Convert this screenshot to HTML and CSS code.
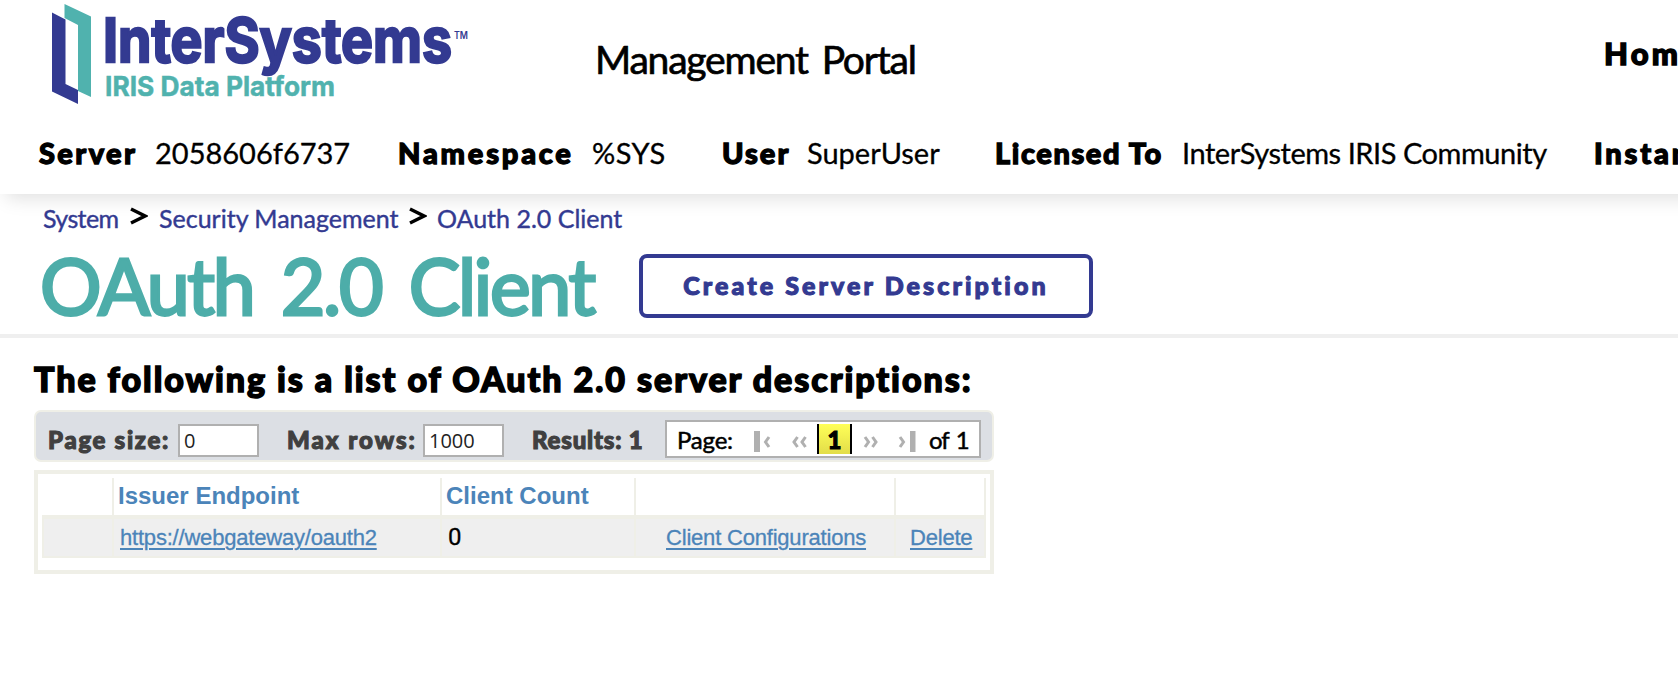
FILE: index.html
```html
<!DOCTYPE html>
<html lang="en">
<head>
<meta charset="utf-8">
<title>OAuth 2.0 Client - Management Portal</title>
<link rel="stylesheet" href="styles.css">
</head>
<body>
<header class="header">
  <div class="brand-row">
    <svg class="logo" width="420" height="106" viewBox="0 0 420 106" role="img" aria-label="InterSystems IRIS Data Platform">
      <path class="mark-teal" d="M12.500 4 39 16.500V97L26 91V25L12.500 18Z"/>
      <path class="mark-blue" d="M0 12.500 13.500 19.500V84L26 90V104L0 91.500Z"/>
      <text class="logo-name" x="51" y="61.500" textLength="349" lengthAdjust="spacingAndGlyphs">InterSystems</text>
      <text class="logo-tm" x="402" y="38.500" textLength="14" lengthAdjust="spacingAndGlyphs">TM</text>
      <text class="logo-product" x="53" y="95.500" textLength="230" lengthAdjust="spacingAndGlyphs">IRIS Data Platform</text>
    </svg>
    <div class="portal">Management Portal</div>
    <a class="home">Home</a>
  </div>
  <div class="info">
    <b class="i-server">Server</b><span>2058606f6737</span>
    <b class="i-ns">Namespace</b><span class="v-ns">%SYS</span>
    <b class="i-user">User</b><span>SuperUser</span>
    <b class="i-lic">Licensed To</b><span class="v-lic">InterSystems IRIS Community</span>
    <b class="i-inst">Instance</b>
  </div>
</header>
<nav class="crumbs">
  <a class="c1">System</a><svg class="sep" width="18" height="18" viewBox="0 0 18 18"><path d="M1 2 15 9 1 16"/></svg>
  <a class="c2">Security Management</a><svg class="sep" width="18" height="18" viewBox="0 0 18 18"><path d="M1 2 15 9 1 16"/></svg>
  <a class="c3">OAuth 2.0 Client</a>
</nav>
<div class="title-row">
  <h1 class="title">OAuth 2.0 Client</h1>
  <button class="create">Create Server Description</button>
</div>
<main class="content">
  <h2 class="lead">The following is a list of OAuth 2.0 server descriptions:</h2>
  <div class="toolbar">
    <label class="t-size">Page size:</label><input class="field" value="0">
    <label class="t-max">Max rows:</label><input class="field" value="1000">
    <span class="t-res">Results: 1</span>
    <div class="pager">
      <span class="p-label">Page:</span>
      <svg class="arrows" width="54" height="30" viewBox="0 0 54 30"><path class="bar" d="M0 7H6V28H0Z"/><path d="M15 13 11.500 18 15 23M43.500 13 40 18 43.500 23M51.500 13 48 18 51.500 23"/></svg>
      <span class="current">1</span>
      <svg class="arrows" width="54" height="30" viewBox="0 0 54 30"><path class="bar" d="M47 7H52.500V28H47Z"/><path d="M2 13 5.500 18 2 23M9.500 13 13 18 9.500 23M37 13 40.500 18 37 23"/></svg>
      <span class="p-of">of 1</span>
    </div>
  </div>
  <div class="table-box">
    <div class="grid head">
      <div></div><div>Issuer Endpoint</div><div>Client Count</div><div></div><div></div>
    </div>
    <div class="grid row">
      <div></div><div><a>https://webgateway/oauth2</a></div><div class="count">0</div><div class="cc"><a>Client Configurations</a></div><div class="del"><a>Delete</a></div>
    </div>
  </div>
</main>
</body>
</html>
```
FILE: styles.css
```css
* { box-sizing: border-box; }
body { margin: 0; height: 686px; overflow: hidden; background: #fff; color: #000; font-family: Lato, sans-serif; white-space: nowrap; }

/* header */
.header { height: 194px; margin-right: -40px; position: relative; background: #fff; box-shadow: 6px 4px 18px rgba(0,0,0,.13); }
.brand-row { display: flex; height: 120px; padding-left: 52px; }
.logo { flex: none; }
.mark-teal { fill: #50b2ae; }
.mark-blue { fill: #333a91; }
.logo-name { font: 700 61px Inter, sans-serif; fill: #333a91; stroke: #333a91; stroke-width: 2.4px; }
.logo-product { font: 700 27.500px Inter, sans-serif; fill: #50b2ae; stroke: #50b2ae; stroke-width: .5px; }
.logo-tm { font: 600 10px Inter, sans-serif; fill: #333a91; }
.portal { flex: none; width: 1009px; padding-left: 123px; font-size: 39px; line-height: 118px; letter-spacing: -1.200px; word-spacing: 5px; -webkit-text-stroke: .7px; }
.home { flex: none; margin-left: 123px; font-size: 31px; line-height: 107px; font-weight: 900; letter-spacing: 3.200px; -webkit-text-stroke: 1.4px; }
.info { display: grid; grid-template-columns: 116px 243px 194px 130px 85px 188px 187px 412px 120px; padding-left: 39px; height: 74px; font-size: 29px; line-height: 66px; -webkit-text-stroke: .3px; }
.info b { font-weight: 900; -webkit-text-stroke: 1.300px; }
.i-server { letter-spacing: 2.400px; }
.i-user { letter-spacing: 2px; }
.i-ns { letter-spacing: 2.800px; }
.i-lic { letter-spacing: 1.600px; }
.i-inst { letter-spacing: 2.800px; }
.v-ns { letter-spacing: .5px; }
.v-lic { letter-spacing: -.46px; }

/* breadcrumbs and title */
.crumbs { display: flex; align-items: flex-start; height: 56px; padding-left: 43px; font-size: 25px; line-height: 49px; color: #333a91; position: relative; -webkit-text-stroke: .4px; }
.sep { flex: none; margin-top: 13px; fill: none; stroke: #000; stroke-width: 3.4; }
.c1, .c2, .c3 { flex: none; }
.c1 { width: 87px; letter-spacing: -.6px; }
.c2 { width: 239px; margin-left: 11px; }
.c2 + .sep { margin-left: 11px; }
.c3 { margin-left: 10px; }
.title-row { display: flex; height: 88px; padding: 4px 0 0 39px; border-bottom: 4px solid #efefef; }
.title { flex: none; margin: 0; width: 600px; padding-left: 1px; font-size: 77px; line-height: 63px; font-weight: 400; letter-spacing: -2.300px; word-spacing: 10px; color: #4dada9; -webkit-text-stroke: 2.800px; }
.create { width: 454px; height: 64px; padding: 0 0 2px; border: 4px solid #333a91; border-radius: 8px; background: #fff; color: #333a91; font: 900 25px/50px Lato, sans-serif; letter-spacing: 3.100px; -webkit-text-stroke: 1.100px; }

/* result toolbar */
.content { padding: 0 34px; }
.lead { margin: 0; height: 72px; font-size: 34px; line-height: 82px; font-weight: 900; letter-spacing: 1.950px; -webkit-text-stroke: 1.500px; }
.toolbar { width: 960px; height: 52px; display: flex; border: 2px solid #efefe7; border-radius: 7px; background: #dcdfe4; padding-left: 12px; color: #404040; font-size: 24px; font-weight: 900; line-height: 55px; -webkit-text-stroke: 1.100px; }
.t-size, .t-max, .t-res, .field, .pager { flex: none; }
.t-size { width: 130px; letter-spacing: 1.700px; }
.t-max { width: 136px; margin-left: 28px; letter-spacing: 2px; }
.t-res { width: 133px; margin-left: 28px; letter-spacing: .8px; }
.field { width: 81px; height: 33px; margin-top: 12px; border: 2px solid #b0b0b0; padding: 0 4px; font: 20px "Open Sans", sans-serif; color: #222; background: #fff; border-radius: 0; -webkit-text-stroke: 0; }
.pager { width: 316px; height: 38px; margin-top: 8px; border: 2px solid #b0b0b0; background: #fff; display: flex; padding: 2px 0 0 10px; color: #000; font-size: 24px; line-height: 32px; font-weight: 400; -webkit-text-stroke: .5px; }
.p-label, .current, .p-of { flex: none; }
.p-label { width: 77px; letter-spacing: -.2px; }
.p-of { margin-left: 12px; letter-spacing: -1.200px; word-spacing: 3px; }
.arrows { flex: none; fill: none; stroke: #b0b0b0; stroke-width: 3; }
.arrows .bar { fill: #b0b0b0; stroke: none; }
.current { width: 35px; height: 30px; margin: 0 11px 0 9px; text-align: center; font-weight: 900; border: solid #000; border-width: 0 2px; background: linear-gradient(#ffff58, #e2dd49); -webkit-text-stroke: 1px; }

/* table */
.table-box { width: 960px; height: 104px; margin-top: 8px; border: 4px solid #efefe7; padding: 4px; font-family: "Liberation Sans", sans-serif; color: #4b84b9; }
.grid { display: grid; grid-template-columns: 72px 328px 194px 260px 90px; }
.grid > div { border-right: 2px solid #efefe7; }
.head { height: 37px; font-size: 24px; font-weight: 700; line-height: 36px; }
.head > div { padding-left: 4px; }
.row { height: 43px; font-size: 22px; line-height: 38px; letter-spacing: -.2px; background: #efefef; border: solid #efefe7; border-width: 4px 0 2px 2px; grid-template-columns: 70px 328px 194px 260px 90px; -webkit-text-stroke: .3px; }
.row > div { padding-left: 6px; }
.row a { text-decoration: underline; text-decoration-thickness: 2px; text-underline-offset: 3px; }
.row .count { font-family: Roboto, sans-serif; font-size: 24px; color: #000; line-height: 37px; }
.row .cc { padding-left: 30px; }
.row .del { padding-left: 14px; }
```
